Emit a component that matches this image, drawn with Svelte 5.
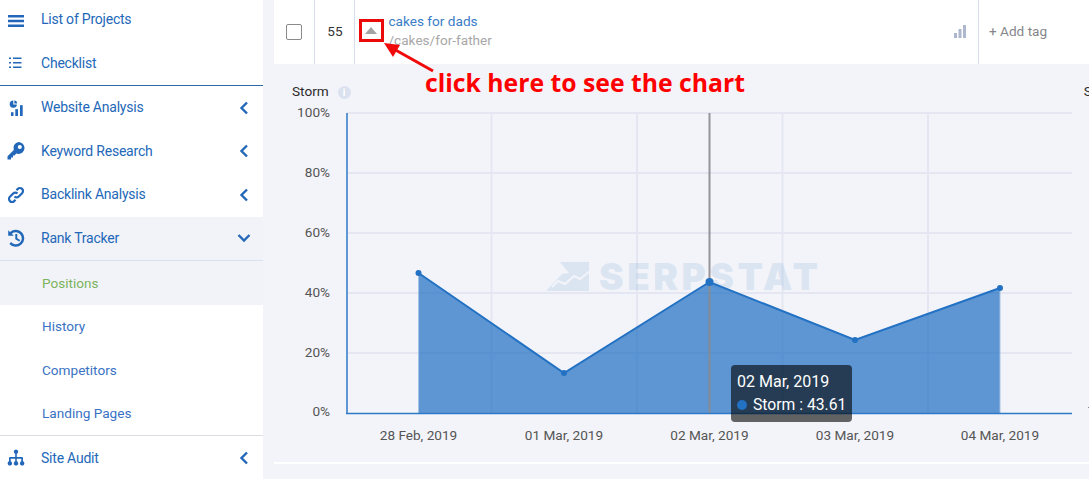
<script>
  const pts = [[418.5,273],[564,373],[709.5,282],[855,340],[1000,288]];
  const line = pts.map(p => p.join(',')).join(' ');
  const area = `418.5,413 ${line} 1000,413`;
  const yTicks = [['100%',116.5],['80%',176.5],['60%',236.5],['40%',296.5],['20%',356.5],['0%',415.5]];
  const xTicks = [['28 Feb, 2019',418.5],['01 Mar, 2019',564],['02 Mar, 2019',709.5],['03 Mar, 2019',855],['04 Mar, 2019',1000]];
  const hGrid = [113,173,233,293,353];
  const vGrid = [491.5,637,782.5,928];
</script>

<div class="page">
  <nav class="side">
    <a class="row first">
      <svg class="ic" viewBox="0 0 16 14"><path d="M0 1h16v2.400H0zM0 5.800h16v2.400H0zM0 10.600h16V13H0z"/></svg>
      <span>List of Projects</span>
    </a>
    <a class="row">
      <svg class="ic" viewBox="0 0 16 14"><path d="M1 1.500h2v1.500H1zM5 1.500h8.500v1.500H5zM1 6h2v1.500H1zM5 6h8.500v1.500H5zM1 10.500h2V12H1zM5 10.500h8.500V12H5z"/></svg>
      <span>Checklist</span>
    </a>
    <div class="rule dark"></div>
    <a class="row">
      <svg class="ic" viewBox="0 0 16 16"><path d="M5.300 .6a3.600 3.600 0 1 0 3.600 3.900H5.300z"/><path d="M6.300 .4a3 3 0 0 1 2.800 3H6.300z"/><rect x="3" y="12.200" width="2.500" height="3.800"/><rect x="7.300" y="9.200" width="2.700" height="6.800"/><rect x="12" y="5.200" width="2.700" height="10.800"/></svg>
      <span>Website Analysis</span>
      <svg class="chev" viewBox="0 0 10 14"><path d="M8 1.500 2.500 7 8 12.500"/></svg>
    </a>
    <a class="row">
      <svg class="ic key" viewBox="0 0 18 18"><path d="M11.500 0a6 6 0 0 1 0 12c-.8 0-1.500-.1-2.200-.4L7.500 13.500H6v2H4v2H.5v-3.300l6.300-6.300A6 6 0 0 1 11.500 0zm1.300 3a2 2 0 1 0 0 4.100 2 2 0 0 0 0-4.100z"/></svg>
      <span>Keyword Research</span>
      <svg class="chev" viewBox="0 0 10 14"><path d="M8 1.500 2.500 7 8 12.500"/></svg>
    </a>
    <a class="row">
      <svg class="ic key linkic" viewBox="0 0 18 18"><path d="M7.500 10.500a3 3 0 0 0 4.300 0l3.300-3.300a3 3 0 0 0-4.300-4.300L9.500 4.200M10.500 7.500a3 3 0 0 0-4.300 0l-3.300 3.300a3 3 0 0 0 4.300 4.300l1.300-1.300"/></svg>
      <span>Backlink Analysis</span>
      <svg class="chev" viewBox="0 0 10 14"><path d="M8 1.500 2.500 7 8 12.500"/></svg>
    </a>
    <a class="row open">
      <svg class="ic key" viewBox="0 0 18 18"><path d="M1.200 1.200v5.600h5.600L4.800 4.800A6 6 0 1 1 4 13l-1.600 1.900A8.500 8.500 0 1 0 3 3z"/><path d="M8.300 5h2v4.200l2.900 1.700-1 1.700-3.900-2.300z"/></svg>
      <span>Rank Tracker</span>
      <svg class="chev down" viewBox="0 0 14 10"><path d="M1.500 2 7 7.500 12.500 2"/></svg>
    </a>
    <div class="rule light"></div>
    <a class="row sub active"><span>Positions</span></a>
    <a class="row sub"><span>History</span></a>
    <a class="row sub"><span>Competitors</span></a>
    <a class="row sub"><span>Landing Pages</span></a>
    <div class="rule grey"></div>
    <a class="row last">
      <svg class="ic key" viewBox="0 0 18 18"><path d="M9 .5a2.200 2.200 0 0 1 .8 4.250V8h5.200a1 1 0 0 1 1 1v3.300a2.200 2.200 0 1 1-1.700 0V9.700H9.800v2.600a2.200 2.200 0 1 1-1.600 0V9.700H3.700v2.600a2.200 2.200 0 1 1-1.700 0V9a1 1 0 0 1 1-1h5.200V4.750A2.200 2.200 0 0 1 9 .5z"/></svg>
      <span>Site Audit</span>
      <svg class="chev" viewBox="0 0 10 14"><path d="M8 1.500 2.500 7 8 12.500"/></svg>
    </a>
  </nav>

  <main class="main">
    <div class="tr">
      <div class="cell check"><span class="box"></span></div>
      <div class="cell num">55</div>
      <div class="cell kw">
        <svg class="tri" viewBox="0 0 12 7"><path d="M6 0 12 7H0z"/></svg>
        <div class="kwtext">
          <a class="title">cakes for dads</a>
          <span class="url">/cakes/for-father</span>
        </div>
        <svg class="bars" viewBox="0 0 12 13"><rect x="0" y="8" width="3" height="5"/><rect x="4.500" y="4" width="3" height="9"/><rect x="9" y="0" width="3" height="13"/></svg>
      </div>
      <div class="cell tag">+ Add tag</div>
    </div>

    <section class="panel">
      <header class="heads">
        <span class="ttl">Storm</span>
        <span class="info">i</span>
        <span class="ttl next">Storm</span>
      </header>
    </section>
    <div class="strip"></div>
  </main>

  <svg class="chart" viewBox="274 64 815 400">
    <defs><clipPath id="tickclip"><rect x="274" y="108" width="815" height="356"/></clipPath></defs>
    {#each hGrid as y}<line class="grid" x1="347" x2="1072" y1={y} y2={y}/>{/each}
    {#each vGrid as x}<line class="grid" x1={x} x2={x} y1="113" y2="413"/>{/each}
    <g class="mark">
      <path d="M560 262H589V291H546L562 274 569 273 560 262z"/>
      <text x="599" y="290">SERPSTAT</text>
    </g>
    <polyline class="zig" points="552,287 558,281 565,284 574,276 580,279 590,271"/>
    <polygon class="fill" points={area}/>
    <line class="edge" x1="418.500" x2="418.500" y1="273" y2="413"/>
    <line class="edge" x1="1000" x2="1000" y1="288" y2="413"/>
    <line class="cross" x1="709.500" x2="709.500" y1="113" y2="413"/>
    <polyline class="stroke" points={line}/>
    {#each pts as p, i}<circle cx={p[0]} cy={p[1]} r={i === 2 ? 4 : 3} class="dot"/>{/each}
    <line class="axis" x1="347" x2="347" y1="113" y2="413.500"/>
    <line class="axis" x1="346" x2="1072" y1="413.500" y2="413.500"/>
    <rect class="nexttick" x="1088" y="407" width="1" height="1"/>
    {#each yTicks as t}<text class="tick" x="330" y={t[1]} text-anchor="end" clip-path="url(#tickclip)">{t[0]}</text>{/each}
    {#each xTicks as t}<text class="tick" x={t[1]} y="439.500" text-anchor="middle">{t[0]}</text>{/each}
  </svg>

  <div class="tooltip">
    <div>02 Mar, 2019</div>
    <div class="tline"><i></i>Storm : 43.61</div>
  </div>

  <div class="redbox"></div>
  <svg class="arrow" viewBox="0 0 60 40">
    <path d="M49 29 8 6" />
    <path class="head" d="M0 1 16 3 9 15z"/>
  </svg>
  <div class="note">click here to see the chart</div>
</div>

<style>
  :global(body) { margin: 0; }
  .page {
    position: relative;
    width: 1089px;
    height: 479px;
    overflow: hidden;
    display: flex;
    background: #f3f4f9;
    font-family: Roboto, "Liberation Sans", sans-serif;
  }
  .side {
    flex: none;
    width: 263px;
    height: 479px;
    background: #fff;
    display: flex;
    flex-direction: column;
  }
  .row {
    flex: none;
    height: 43.5px;
    display: flex;
    align-items: center;
    color: #2368b8;
    font-size: 14px;
    font-weight: 400;
    letter-spacing: -.22px;
    padding: 0 0 1px 41px;
    position: relative;
    box-sizing: border-box;
  }
  .row.first { height: 41.5px; padding-bottom: 4px; }
  .row.last { padding-bottom: 0; }
  .row.open { background: #f2f3f8; }
  .row.sub { padding: 0 0 0 42px; color: #3a72c4; font-size: 13.6px; letter-spacing: 0; }
  .row.active { background: #f2f3f8; color: #7cb45e; }
  .rule { flex: none; height: 1px; }
  .rule.dark { background: #2a6aa8; }
  .rule.light { background: #d9e2f2; }
  .rule.grey { background: #dcdde2; }
  .ic {
    position: absolute;
    left: 8px;
    top: 50%;
    width: 16px;
    height: 16px;
    transform: translateY(-50%);
    fill: #2368b8;
  }
  .ic.key { left: 7px; width: 18px; height: 18px; }
  .ic.linkic { fill: none; stroke: #2368b8; stroke-width: 2.200; }
  .chev {
    position: absolute;
    left: 239px;
    top: 50%;
    width: 10px;
    height: 14px;
    transform: translateY(-50%);
    fill: none;
    stroke: #2368b8;
    stroke-width: 2.400;
  }
  .chev.down { left: 237px; width: 14px; height: 10px; }

  .main {
    flex: 1;
    margin-left: 11px;
    display: flex;
    flex-direction: column;
    min-width: 0;
  }
  .tr {
    flex: none;
    height: 64px;
    background: #fff;
    display: flex;
  }
  .cell {
    display: flex;
    align-items: center;
    box-sizing: border-box;
    border-right: 1px solid #d6deee;
  }
  .check { width: 41px; padding-left: 12px; }
  .box {
    width: 14px;
    height: 14px;
    border: 1px solid #8a8a8a;
    border-radius: 2px;
    background: #fff;
  }
  .num { width: 40px; justify-content: center; font-size: 13.6px; color: #333; padding-left: 1px; padding-bottom: 2px; }
  .kw { width: 624px; position: relative; padding-left: 33.5px; }
  .tri { position: absolute; left: 10px; top: 27px; width: 12px; height: 7px; fill: #a3a3a3; }
  .kwtext { display: flex; flex-direction: column; line-height: 19px; font-size: 13.6px; padding-bottom: 2px; }
  .title { color: #3a7dc6; }
  .url { color: #a8a8a8; }
  .bars { position: absolute; right: 12px; top: 25px; width: 12px; height: 13px; fill: #adb8cf; }
  .tag { border: none; padding: 0 0 2px 10px; font-size: 13.6px; color: #85868a; }

  .panel { flex: none; height: 398px; }
  .heads { display: flex; align-items: center; padding: 19px 0 0 18px; white-space: nowrap; height: 16px; }
  .ttl { flex: none; font-size: 13.6px; color: #2b2b2b; line-height: 16px; }
  .info {
    flex: none;
    width: 13px;
    height: 13px;
    border-radius: 50%;
    background: #dbe1ef;
    color: #fff;
    font: bold 10px/13px Roboto, sans-serif;
    text-align: center;
    margin-left: 9px;
    margin-top: 2px;
  }
  .next { margin-left: 733px; }
  .strip { flex: none; height: 2px; background: #fff; }

  .chart {
    position: absolute;
    left: 274px;
    top: 64px;
    width: 815px;
    height: 400px;
    overflow: hidden;
  }
  .grid { stroke: #e4e7f2; stroke-width: 2; }
  .fill { fill: #2271c3; fill-opacity: .72; }
  .edge { stroke: #a4c3e4; stroke-width: 1; }
  .cross { stroke: #8a8a8f; stroke-width: 2; opacity: .9; }
  .stroke { fill: none; stroke: #2271c3; stroke-width: 2; }
  .dot { fill: #2271c3; }
  .axis { stroke: #2d79c7; stroke-width: 1.500; }
  .tick { font: 13.6px Roboto, sans-serif; fill: #555; }
  .nexttick { fill: #888; }
  .mark { fill: #2271c3; opacity: .11; }
  .mark text { font: 900 37px Inter, Roboto, sans-serif; letter-spacing: 3.500px; }
  .zig { fill: none; stroke: #f3f4f9; stroke-width: 2; }

  .tooltip {
    position: absolute;
    left: 731px;
    top: 365px;
    width: 121px;
    height: 57px;
    box-sizing: border-box;
    padding: 5px 6px;
    border-radius: 4px;
    background: rgba(0,0,0,.6);
    color: #fff;
    font-size: 16px;
    line-height: 23px;
  }
  .tline { display: flex; align-items: center; white-space: nowrap; font-size: 15.7px; }
  .tline i {
    flex: none;
    width: 10px;
    height: 10px;
    border-radius: 50%;
    background: #2271c3;
    margin-right: 6px;
  }
  .redbox {
    position: absolute;
    left: 359px;
    top: 19px;
    width: 25px;
    height: 23px;
    box-sizing: border-box;
    border: 3px solid #ea0a0a;
  }
  .arrow {
    position: absolute;
    left: 384px;
    top: 42px;
    width: 60px;
    height: 40px;
    fill: none;
    stroke: #f00a0a;
    stroke-width: 3;
  }
  .arrow .head { fill: #f00a0a; stroke: none; }
  .note {
    position: absolute;
    left: 425px;
    top: 66px;
    color: #f00;
    font: bold 24.750px/34px "Open Sans", sans-serif;
    white-space: nowrap;
  }
</style>
